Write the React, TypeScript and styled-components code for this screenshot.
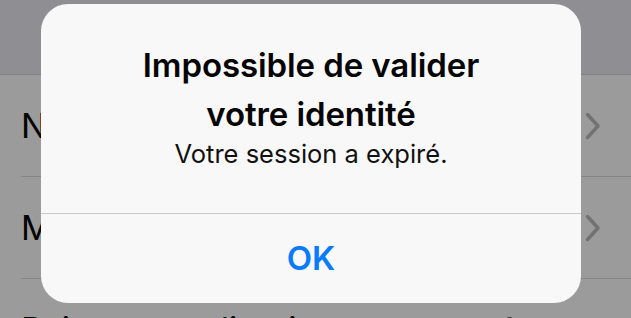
import React from "react";
import styled, { createGlobalStyle } from "styled-components";

const GlobalStyle = createGlobalStyle`
  html, body {
    margin: 0;
    padding: 0;
    background: #9b9b9b;
    overflow: hidden;
  }
  * {
    box-sizing: border-box;
  }
`;

const Screen = styled.div`
  position: relative;
  width: 631px;
  height: 318px;
  overflow: hidden;
  font-family: Inter, "Liberation Sans", sans-serif;
  background: #9b9b9b;
`;

// barre de navigation assombrie
const NavBar = styled.div`
  height: 75px;
  background: #8f8f93;
  border-bottom: 1px solid #838385;
`;

const List = styled.div`
  display: flex;
  flex-direction: column;
`;

const Row = styled.div`
  display: flex;
  align-items: center;
  height: 102px;
  margin-left: 21px;
  padding-right: 30px;
  border-bottom: 1px solid #858585;
  color: #050505;
  font-size: 34px;
`;

const RowLabel = styled.div`
  flex: 1;
  white-space: nowrap;
`;

const RowValue = styled.div`
  color: #3a3a3a;
  white-space: nowrap;
`;

const Chevron = () => (
  <svg width="16" height="28" viewBox="0 0 16 28">
    <path
      d="M2.5 2.5 L13 14 L2.5 25.5"
      fill="none"
      stroke="#727272"
      strokeWidth="3.5"
      strokeLinecap="round"
      strokeLinejoin="round"
    />
  </svg>
);

// l'alerte posée par-dessus la liste
const Alert = styled.div`
  position: absolute;
  left: 41px;
  top: 4px;
  width: 540px;
  height: 299px;
  border-radius: 27px;
  background: #f8f8f8;
  display: flex;
  flex-direction: column;
  overflow: hidden;
`;

const AlertBody = styled.div`
  height: 210px;
  padding-top: 37px;
  display: flex;
  flex-direction: column;
  align-items: center;
  text-align: center;
  border-bottom: 1px solid #c9c9cb;
`;

const Title = styled.div`
  font-size: 33px;
  font-weight: 600;
  line-height: 49px;
  color: #050505;
  letter-spacing: -0.1px;
`;

const Message = styled.div`
  margin-top: -2px;
  font-size: 25.5px;
  line-height: 34px;
  color: #111;
`;

const AlertButton = styled.button`
  flex: 1;
  border: none;
  background: transparent;
  font-family: inherit;
  font-size: 33px;
  font-weight: 600;
  color: #0a7aff;
  padding: 0 0 2px;
`;

export default function App() {
  return (
    <>
      <GlobalStyle />
      <Screen>
        <NavBar />
        <List>
          <Row>
            <RowLabel>Nom</RowLabel>
            <Chevron />
          </Row>
          <Row>
            <RowLabel>Mot de passe</RowLabel>
            <Chevron />
          </Row>
          <Row>
            <RowLabel>Paiement et livraison</RowLabel>
            <RowValue>Aucun</RowValue>
          </Row>
        </List>
        <Alert>
          <AlertBody>
            <Title>
              Impossible de valider
              <br />
              votre identité
            </Title>
            <Message>Votre session a expiré.</Message>
          </AlertBody>
          <AlertButton>OK</AlertButton>
        </Alert>
      </Screen>
    </>
  );
}
